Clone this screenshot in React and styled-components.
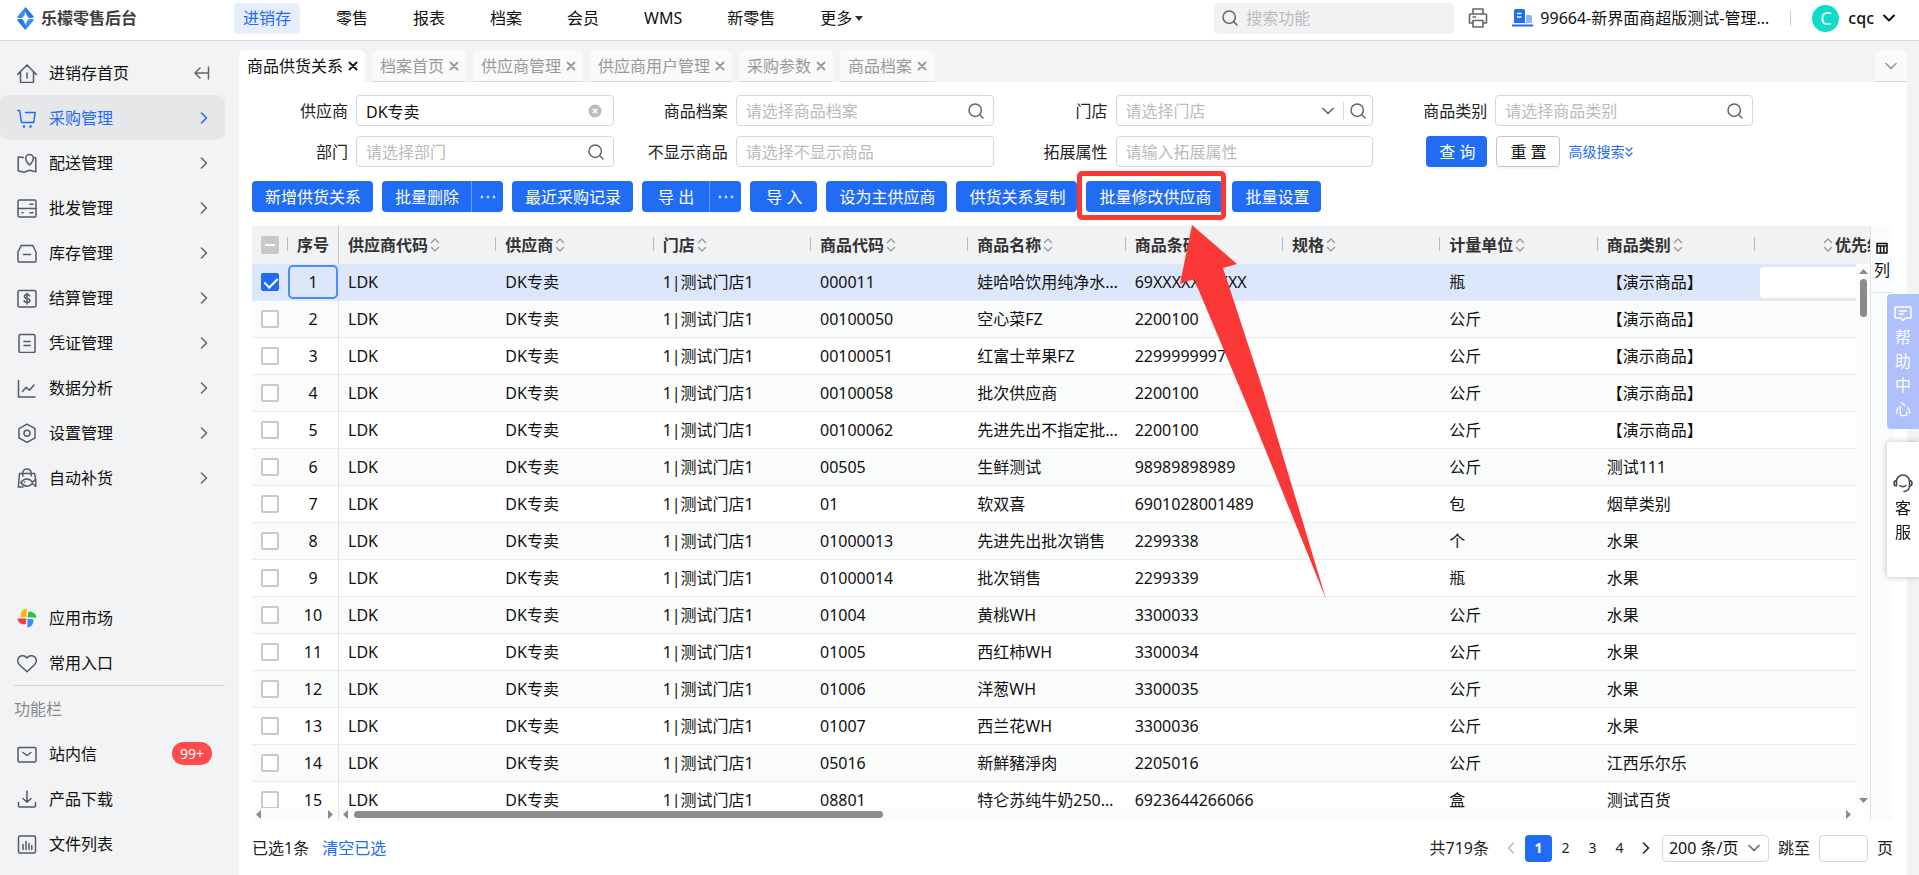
import React from 'react'
import styled, { createGlobalStyle, css } from 'styled-components'

const blue = '#216cf5'
const font = '"Noto Sans", "Noto Sans CJK SC", sans-serif'

const GlobalStyle = createGlobalStyle`
  * {
    box-sizing: border-box;
  }
  body {
    margin: 0;
    color: #111;
    font: 16px/24px ${font};
  }
  button, input, select {
    margin: 0;
    color: inherit;
    font: inherit;
  }
  button {
    padding: 0;
    border: 0;
    background: none;
    white-space: nowrap;
    cursor: pointer;
  }
  a {
    color: inherit;
    text-decoration: none;
  }
  svg {
    display: block;
    flex: none;
  }
`

const Page = styled.div`
  display: flex;
  flex-direction: column;
  height: 100vh;
  background: #f1f3f5;
`

/* ---------- icons ---------- */

const Svg = ({ size = 20, width, height, box, stroke = 1.5, children, ...rest }) => (
  <svg
    width={width || size}
    height={height || size}
    viewBox={box || `0 0 ${width || size} ${height || size}`}
    fill="none"
    stroke="currentColor"
    strokeWidth={stroke}
    strokeLinecap="round"
    strokeLinejoin="round"
    aria-hidden="true"
    {...rest}
  >
    {children}
  </svg>
)

const SearchIcon = () => (
  <Svg size={16}>
    <circle cx="7.2" cy="7.2" r="6.2" />
    <path d="M11.8 11.8L15 15" />
  </Svg>
)

const Chevron = ({ dir = 'right', size = 12, stroke = 1.6 }) => {
  const paths = {
    right: 'M3.5 1l5 5-5 5',
    left: 'M8.5 1l-5 5 5 5',
    down: 'M1 3.5l5 5 5-5',
  }
  return (
    <Svg size={size} box="0 0 12 12" stroke={stroke}>
      <path d={paths[dir]} />
    </Svg>
  )
}

const CloseIcon = () => (
  <Svg size={10} stroke={1.8}>
    <path d="M1.5 1.5l7 7M8.5 1.5l-7 7" />
  </Svg>
)

const Dots = () => (
  <svg width="16" height="4" viewBox="0 0 16 4" fill="#c8dafd" aria-hidden="true">
    <circle cx="2" cy="2" r="1.4" />
    <circle cx="8" cy="2" r="1.4" />
    <circle cx="14" cy="2" r="1.4" />
  </svg>
)

const SortIcon = () => (
  <Svg width={10} height={16} stroke={1.4}>
    <path d="M1.5 5.5L5 2l3.5 3.5M1.5 10.5L5 14l3.5-3.5" />
  </Svg>
)

const Triangle = ({ dir }) => {
  const points = {
    left: '6,0 6,9 1,4.5',
    right: '2,0 2,9 7,4.5',
    up: '0,7 9,7 4.5,2',
    down: '0,2 9,2 4.5,7',
  }
  return (
    <svg width="9" height="9" viewBox="0 0 9 9" aria-hidden="true">
      <polygon points={points[dir]} fill="#8b8b8b" />
    </svg>
  )
}

const menuIcons = {
  home: (
    <path d="M.5 11.500L10 2l9.500 9.500M3.500 9v9.500a1 1 0 0 0 1 1h11a1 1 0 0 0 1-1V9M10 10v5" />
  ),
  cart: (
    <>
      <path d="M.8 2.500h1.900l1.800 12h12.200l1.500-10H8.500" />
      <circle cx="7" cy="18.500" r=".6" />
      <circle cx="13.500" cy="18.500" r=".6" />
    </>
  ),
  map: (
    <>
      <path d="M6.500 4.500L1.200 4v13.800l5.600 1.500 6-2 6 1.500V5l-2-.5" />
      <path d="M12.500 12C9.800 9.500 8.700 7.500 8.700 5.300a3.800 3.800 0 0 1 7.600 0c0 2.200-1.100 4.200-3.800 6.700z" />
    </>
  ),
  server: (
    <>
      <rect x="1" y="2" width="18" height="17" rx="1.500" />
      <path d="M1 10.500h18M13 6.300h3M13 14.800h3M5 14.800h1" />
    </>
  ),
  box: (
    <>
      <path d="M4.200 2.500h11.600L19 9v9a1 1 0 0 1-1 1H2a1 1 0 0 1-1-1V9z" />
      <path d="M6.500 11.500h7" />
    </>
  ),
  money: (
    <>
      <rect x="1" y="2.500" width="18" height="16.500" rx="1.500" />
      <path d="M12.800 8c-.3-1-1.300-1.500-2.700-1.500-1.600 0-2.700.7-2.700 1.900 0 2.900 5.500 1.200 5.500 4.200 0 1.300-1.200 2-2.800 2-1.700 0-2.700-.6-3-1.800M10 5.200V16" />
    </>
  ),
  doc: (
    <>
      <rect x="2" y="1.500" width="16" height="18" rx="1.500" />
      <path d="M7 8.500h6M7 12.500h6" />
    </>
  ),
  chart: <path d="M1.500 2.500V19H18M5.500 13.500l3.700-4.200 3.300 3L17 7" />,
  setting: (
    <>
      <path d="M10 1.200l8 4.500v9.200l-8 4.500-8-4.500V5.700z" />
      <circle cx="10" cy="10.300" r="3" />
    </>
  ),
  bag: (
    <>
      <path d="M5.800 8V5.100a4.200 4.200 0 0 1 8.400 0V8M6 19H1.300L2.500 5.500h15l1 5" />
      <path d="M3.800 14.500c3.500-4.600 8.500-4.600 11.500-.4l3.500-2.800v7l-3.500-2.800c-3 3.800-8 3.800-11.500-1z" />
      <path d="M7.500 14h.1" />
    </>
  ),
  heart: (
    <path d="M10 18.800L2.300 11.500C0 9.100.3 5.500 2.600 3.700 4.900 1.900 8.100 2.500 10 5c1.900-2.500 5.100-3.100 7.400-1.300 2.300 1.800 2.600 5.400.3 7.800z" />
  ),
  mail: (
    <>
      <rect x="1" y="3.500" width="18" height="14.500" rx="1.200" />
      <path d="M6 8.500l4 3 4-3" />
    </>
  ),
  download: (
    <path d="M10 2v11M6 9.500l4 3.800 4-3.800M1.500 13.500V17a1 1 0 0 0 1 1h15a1 1 0 0 0 1-1v-3.500" />
  ),
  file: (
    <>
      <rect x="1.500" y="2" width="17" height="17" rx="1.500" />
      <path d="M6 10.500v5M9 7.500v8M12 9.500v6M14.800 11.500v4" />
    </>
  ),
}

const MarketIcon = () => (
  <svg width="20" height="20" viewBox="0 0 20 20" aria-hidden="true">
    <path d="M9.600 9.300V.5C5.500 1 3.200 4 3.800 8.700z" fill="#ffb400" />
    <path d="M10.700 9.600H19.500C19 5.500 16 3.200 11.300 3.800z" fill="#2fc53a" />
    <path d="M10.400 10.700v8.800c4.100-.5 6.400-3.500 5.800-8.200z" fill="#2f8ffb" />
    <path d="M9.300 10.400H.5c.5 4.100 3.500 6.400 8.200 5.800z" fill="#fb3a3d" />
  </svg>
)

/* ---------- header ---------- */

const Header = styled.header`
  display: flex;
  flex: none;
  align-items: center;
  height: 41px;
  padding: 0 24px 4px 17px;
  border-bottom: 1px solid #d7d8da;
  background: #fff;
`

const Logo = styled.a`
  display: flex;
  align-items: center;
  gap: 7px;
  width: 217px;
  color: #3b3d42;
  font-weight: 700;
`

const Nav = styled.nav`
  display: flex;
  gap: 27px;
`

const NavLink = styled.a`
  display: flex;
  align-items: center;
  gap: 3px;
  height: 31px;
  padding: 0 9px;
  border-radius: 4px;
  white-space: nowrap;
  ${(p) =>
    p.$active &&
    css`
      background: #e6edfc;
      color: ${blue};
    `}
`

const Caret = styled.span`
  border: 4px solid transparent;
  border-top: 5px solid #333;
  border-bottom: 0;
`

const GlobalSearch = styled.label`
  display: flex;
  align-items: center;
  gap: 8px;
  width: 240px;
  height: 31px;
  margin-left: auto;
  padding: 0 8px;
  border-radius: 4px;
  background: #f1f2f4;
  color: #666;

  input {
    flex: 1;
    min-width: 0;
    padding: 0;
    border: 0;
    outline: 0;
    background: none;
  }
  input::placeholder {
    color: #bbb;
  }
`

const PrintButton = styled.button`
  margin-left: 14px;
  color: #666;
`

const Company = styled.a`
  display: flex;
  align-items: center;
  gap: 7px;
  width: 257px;
  margin-left: 24px;

  span {
    overflow: hidden;
    text-overflow: ellipsis;
    white-space: nowrap;
  }
`

const Divider = styled.i`
  width: 1px;
  height: 16px;
  margin: 0 21px;
  background: #ccc;
`

const User = styled.button`
  display: flex;
  align-items: center;
  gap: 9px;
  font-weight: 500;
`

const Avatar = styled.span`
  width: 27px;
  height: 27px;
  border-radius: 50%;
  background: #10dbc9;
  color: #fff;
  font-size: 18px;
  font-weight: 400;
  line-height: 27px;
  text-align: center;
`

/* ---------- sidebar ---------- */

const Body = styled.div`
  display: flex;
  flex: 1;
  min-height: 0;
`

const Sidebar = styled.aside`
  display: flex;
  flex: none;
  flex-direction: column;
  width: 239px;
  padding: 9px 14px 9px 0;
`

const MenuItem = styled.a`
  display: flex;
  align-items: center;
  gap: 12px;
  height: 45px;
  padding: 0 15px 0 17px;
  border-radius: 8px;
  ${(p) => p.$active && `background: #e5e7e9; color: ${blue};`}

  > svg {
    color: ${(p) => (p.$active ? blue : '#565a68')};
  }
  > span:last-child {
    margin-left: auto;
    color: ${(p) => (p.$active ? blue : '#666')};
  }
`

const SideGap = styled.div`
  flex: 1;
`

const SectionTitle = styled.div`
  height: 46px;
  margin-left: 14px;
  border-top: 1px solid #d3d5d8;
  color: #888;
  line-height: 46px;
`

const Badge = styled.b`
  height: 23px;
  margin-right: -2px;
  margin-left: auto;
  padding: 0 8px;
  border-radius: 12px;
  background: #ff4b4e;
  color: #fff;
  font-size: 14px;
  font-weight: 400;
  line-height: 23px;
`

/* ---------- content ---------- */

const Main = styled.main`
  display: flex;
  flex: 1;
  flex-direction: column;
  min-width: 0;
  margin-right: 12px;
  padding-top: 9px;
`

const Tabs = styled.div`
  display: flex;
  flex: none;
  gap: 7px;
  height: 32px;
`

const Tab = styled.button`
  display: flex;
  align-items: center;
  gap: 5px;
  height: 32px;
  padding: 0 7px 0 8px;
  border-bottom: 1px solid ${(p) => (p.$active ? '#fff' : '#d9dadb')};
  border-radius: 5px 5px 0 0;
  background: ${(p) => (p.$active ? '#fff' : '#fafafa')};
  color: ${(p) => (p.$active ? '#111' : '#999')};
`

const TabsMore = styled(Tab)`
  justify-content: center;
  width: 32px;
  margin-left: auto;
  padding: 0;
`

const Card = styled.section`
  display: flex;
  flex: 1;
  flex-direction: column;
  min-height: 0;
  padding: 13px 14px 0 13px;
  background: #fff;
`

const Filters = styled.form`
  display: grid;
  grid-template-columns: repeat(4, minmax(0, 1fr));
  gap: 10px 18px;
  padding-right: 140px;
`

const Field = styled.div`
  display: flex;
  align-items: center;
  gap: 8px;
  height: 31px;

  > label {
    width: 96px;
    color: #222;
    text-align: right;
    white-space: nowrap;
  }
`

const Control = styled.div`
  display: flex;
  flex: 1;
  align-items: center;
  min-width: 0;
  height: 31px;
  padding: 0 9px;
  border: 1px solid #d6d7d9;
  border-radius: 4px;
  color: #666;

  input, select {
    flex: 1;
    min-width: 0;
    height: 28px;
    padding: 0;
    border: 0;
    outline: 0;
    appearance: none;
    background: none;
    color: #111;
  }
  select {
    color: #bbb;
  }
  input::placeholder {
    color: #bbb;
  }
`

const StoreControl = styled(Control)`
  padding-right: 6px;
`

const Bar = styled.i`
  width: 1px;
  height: 18px;
  margin: 0 6px 0 9px;
  background: #d6d7d9;
`

const FilterActions = styled.div`
  display: flex;
  align-items: center;
  gap: 9px;
  padding-left: 35px;
`

const Button = styled.button`
  height: 31px;
  padding: 0 12px 0 13px;
  border: ${(p) => (p.$plain ? '1px solid #c4c6c9' : '0')};
  border-radius: 4px;
  background: ${(p) => (p.$plain ? '#fff' : blue)};
  box-shadow: 0 2px 0 rgba(0, 0, 0, 0.03);
  color: ${(p) => (p.$plain ? '#111' : '#fff')};
`

const MoreLink = styled.a`
  display: flex;
  align-items: center;
  color: ${blue};
  font-size: 14px;
  white-space: nowrap;
`

const Toolbar = styled.div`
  display: flex;
  gap: 9px;
  margin: 14px 0;
`

const ToolButton = styled(Button)`
  ${(p) => p.$short && 'padding: 0 15px 0 16px;'}
`

const Split = styled.div`
  display: flex;

  > button:first-child {
    border-radius: 4px 0 0 4px;
  }
`

const SplitMore = styled(Button)`
  display: flex;
  align-items: center;
  justify-content: center;
  width: 32px;
  padding: 0;
  border-left: 1px solid #6c9df9;
  border-radius: 0 4px 4px 0;
`

const Marked = styled.div`
  position: relative;
  z-index: 2;

  &::after {
    content: '';
    position: absolute;
    inset: -10px -3px -8px -9px;
    border: 5px solid #fb3838;
    border-radius: 5px;
    pointer-events: none;
  }
  > svg {
    position: absolute;
    top: 44px;
    left: 94px;
    pointer-events: none;
  }
`

/* ---------- table ---------- */

const Grid = styled.div`
  display: flex;
  flex: 1;
  min-height: 0;
`

const TableArea = styled.div`
  display: flex;
  flex: 1;
  flex-direction: column;
  min-width: 0;
`

const Viewport = styled.div`
  position: relative;
  flex: 1;
  min-height: 0;
  overflow: hidden;
`

const Table = styled.table`
  width: 100%;
  border-spacing: 0;
  table-layout: fixed;
`

const Th = styled.th`
  position: relative;
  height: 38px;
  padding: 0 0 0 ${(p) => (p.$last ? 68 : 9)}px;
  overflow: hidden;
  background: #f1f2f4;
  color: #333;
  font-weight: 700;
  text-align: left;
  white-space: nowrap;
  ${(p) => p.$pinned && 'border-right: 1px solid #c3c6cd;'}

  &::after {
    content: '';
    position: absolute;
    top: 11px;
    right: 0;
    width: ${(p) => (p.$pinned || p.$last ? 0 : 1)}px;
    height: 14px;
    background: #b3b7c0;
  }
  > span {
    display: flex;
    align-items: center;
    gap: 2px;
  }
  svg {
    color: #999;
  }
`

const Row = styled.tr`
  background: ${(p) => (p.$selected ? '#dde7fb' : p.$even ? '#fafcfb' : '#fff')};
`

const Td = styled.td`
  height: 37px;
  padding: 0 5px 0 9px;
  border-bottom: 1px solid #e9eaea;
  overflow: hidden;
  text-overflow: ellipsis;
  white-space: nowrap;
`

const IndexCell = styled(Td)`
  padding: 1px 0;
  border-right: 1px solid #e1e2e4;
  text-align: center;

  > span {
    display: block;
    height: 34px;
    border: 2px solid ${(p) => (p.$selected ? '#4d8cf9' : 'transparent')};
    border-radius: 5px;
    line-height: 30px;
  }
`

const EditCell = styled(Td)`
  padding: 1px 0 1px 4px;

  input {
    display: block;
    width: 100%;
    height: 33px;
    border: 1px solid #e3e5e8;
    border-radius: 4px;
    background: #fff;
  }
`

const Checkbox = styled.input.attrs({ type: 'checkbox' })`
  display: block;
  position: relative;
  width: 18px;
  height: 18px;
  border: 2px solid #c9c9c9;
  border-radius: 2px;
  appearance: none;
  background: #fff;

  &:checked {
    border-color: ${blue};
    background: ${blue};
  }
  &:checked::after {
    content: '';
    position: absolute;
    top: 0;
    left: 4px;
    width: 6px;
    height: 11px;
    border: solid #fff;
    border-width: 0 2px 2px 0;
    transform: rotate(45deg);
  }
  ${(p) =>
    p.$partial &&
    css`
      background: #c9c9c9;
      &::after {
        content: '';
        position: absolute;
        top: 6px;
        left: 2px;
        width: 10px;
        height: 2px;
        background: #fff;
      }
    `}
`

const ScrollY = styled.div`
  display: flex;
  position: absolute;
  top: 38px;
  right: 0;
  bottom: 0;
  flex-direction: column;
  align-items: center;
  width: 14px;
  padding: 3px 0;
  background: #fcfcfc;
`

const ScrollX = styled.div`
  display: flex;
  flex: none;
  height: 13px;
  margin-right: 14px;
  background: #fcfcfc;
`

const ScrollPart = styled.div`
  display: flex;
  align-items: center;
  justify-content: space-between;
  padding: 0 3px;
  ${(p) => (p.$pinned ? 'width: 87px; border-right: 1px solid #e1e2e4;' : 'flex: 1;')}
`

const ThumbY = styled.span`
  width: 7px;
  height: 38px;
  margin: 3px 0 auto;
  border-radius: 4px;
  background: #8b8b8b;
`

const ThumbX = styled.span`
  width: 35%;
  height: 7px;
  margin: 0 auto 0 3px;
  border-radius: 4px;
  background: #8b8b8b;
`

const ColumnPanel = styled.div`
  flex: none;
  width: 23px;
  border-left: 1px solid #e1e3e6;
  background: #fafbfc;

  button {
    display: flex;
    flex-direction: column;
    align-items: center;
    gap: 4px;
    width: 22px;
    height: 67px;
    padding-top: 16px;
    border-bottom: 1px solid #e1e3e6;
  }
`

const Footer = styled.footer`
  display: flex;
  flex: none;
  align-items: center;
  gap: 9px;
  height: 54px;
  color: #222;
  white-space: nowrap;

  > a {
    margin: 0 auto 0 4px;
    color: ${blue};
  }
`

const Pages = styled.nav`
  display: flex;
`

const PageButton = styled.button`
  display: flex;
  align-items: center;
  justify-content: center;
  width: 27px;
  height: 27px;
  border-radius: 4px;
  font-size: 14px;
  ${(p) => p.$active && `background: ${blue}; color: #fff; font-weight: 700;`}
  &:disabled {
    color: #bbb;
  }
`

const PageSize = styled.div`
  display: flex;
  align-items: center;
  width: 107px;
  height: 27px;
  margin-left: -7px;
  padding: 0 8px 0 6px;
  border: 1px solid #d6d7d9;
  border-radius: 4px;
  color: #666;

  select {
    flex: 1;
    min-width: 0;
    padding: 0;
    border: 0;
    appearance: none;
    background: none;
    color: #111;
  }
`

const JumpInput = styled.input`
  width: 49px;
  height: 27px;
  border: 1px solid #d6d7d9;
  border-radius: 4px;
`

/* ---------- floating buttons ---------- */

const Floating = styled.div`
  display: flex;
  position: fixed;
  top: 294px;
  right: 0;
  z-index: 3;
  flex-direction: column;
  gap: 13px;
`

const FloatButton = styled.button`
  display: flex;
  flex-direction: column;
  align-items: center;
  justify-content: center;
  width: 32px;
  height: 135px;
  padding-bottom: ${(p) => (p.$help ? 0 : 6)}px;
  border-radius: 4px 0 0 4px;
  background: ${(p) => (p.$help ? '#aec1fc' : '#fff')};
  box-shadow: ${(p) => (p.$help ? 'none' : '0 0 6px rgba(0, 0, 0, 0.25)')};
  color: ${(p) => (p.$help ? '#fff' : '#111')};
  line-height: 24px;

  svg {
    margin: 3px 0;
    color: ${(p) => (p.$help ? '#fff' : '#444a5a')};
  }
`

/* ---------- data ---------- */

const navItems = ['进销存', '零售', '报表', '档案', '会员', 'WMS', '新零售']

const menu = [
  ['cart', '采购管理'],
  ['map', '配送管理'],
  ['server', '批发管理'],
  ['box', '库存管理'],
  ['money', '结算管理'],
  ['doc', '凭证管理'],
  ['chart', '数据分析'],
  ['setting', '设置管理'],
  ['bag', '自动补货'],
]

const tabs = ['商品供货关系', '档案首页', '供应商管理', '供应商用户管理', '采购参数', '商品档案']

const columns = ['供应商代码', '供应商', '门店', '商品代码', '商品名称', '商品条码', '规格', '计量单位', '商品类别']

const goods = [
  ['000011', '娃哈哈饮用纯净水596ml', '69XXXXXXXXXX', '瓶', '【演示商品】'],
  ['00100050', '空心菜FZ', '2200100', '公斤', '【演示商品】'],
  ['00100051', '红富士苹果FZ', '2299999997', '公斤', '【演示商品】'],
  ['00100058', '批次供应商', '2200100', '公斤', '【演示商品】'],
  ['00100062', '先进先出不指定批次销售', '2200100', '公斤', '【演示商品】'],
  ['00505', '生鲜测试', '98989898989', '公斤', '测试111'],
  ['01', '软双喜', '6901028001489', '包', '烟草类别'],
  ['01000013', '先进先出批次销售', '2299338', '个', '水果'],
  ['01000014', '批次销售', '2299339', '瓶', '水果'],
  ['01004', '黄桃WH', '3300033', '公斤', '水果'],
  ['01005', '西红柿WH', '3300034', '公斤', '水果'],
  ['01006', '洋葱WH', '3300035', '公斤', '水果'],
  ['01007', '西兰花WH', '3300036', '公斤', '水果'],
  ['05016', '新鮮豬淨肉', '2205016', '公斤', '江西乐尔乐'],
  ['08801', '特仑苏纯牛奶250ml*12', '6923644266066', '盒', '测试百货'],
]

const Item = ({ icon, label, arrow, active, children }) => (
  <MenuItem href="#" $active={active}>
    {icon === 'market' ? <MarketIcon /> : <Svg>{menuIcons[icon]}</Svg>}
    {label}
    {arrow && (
      <span>
        <Chevron />
      </span>
    )}
    {children}
  </MenuItem>
)

const TextField = ({ id, label, placeholder, value, icon }) => (
  <Field>
    <label htmlFor={id}>{label}</label>
    <Control>
      <input id={id} placeholder={placeholder} defaultValue={value} />
      {icon}
    </Control>
  </Field>
)

const ClearButton = styled.button`
  margin-right: 2px;
`

const ClearIcon = () => (
  <ClearButton type="button" aria-label="清除">
    <svg width="14" height="14" viewBox="0 0 14 14" aria-hidden="true">
      <circle cx="7" cy="7" r="6.5" fill="#bcbcbc" />
      <path d="M4.7 4.7l4.6 4.6M9.3 4.7L4.7 9.3" stroke="#fff" strokeWidth="1.5" />
    </svg>
  </ClearButton>
)

const TopBar = () => (
  <Header>
    <Logo href="#">
      <svg width="17" height="23" viewBox="0 0 17 23" aria-hidden="true">
        <path d="M8.5 0l8 9.500v4l-8 9.500-8-9.500v-4z" fill="#3d8bfa" />
        <path d="M.5 13.500L8.500 23v-5L4 12z" fill="#2674f2" />
        <path d="M16.500 9.500L8.500 0v5l4.500 6z" fill="#2674f2" />
        <path d="M8.500 4.500c.8 4 1.800 5.800 4.500 7-2.700 1.200-3.700 3-4.500 7-.8-4-1.800-5.800-4.500-7 2.700-1.200 3.700-3 4.500-7z" fill="#fff" />
        <path d="M0 11.500h4.500M12.500 11.500H17" stroke="#fff" strokeWidth="1" />
      </svg>
      乐檬零售后台
    </Logo>
    <Nav>
      {navItems.map((name, i) => (
        <NavLink href="#" key={name} $active={i === 0}>
          {name}
        </NavLink>
      ))}
      <NavLink href="#">
        更多
        <Caret />
      </NavLink>
    </Nav>
    <GlobalSearch>
      <SearchIcon />
      <input placeholder="搜索功能" aria-label="搜索功能" />
    </GlobalSearch>
    <PrintButton aria-label="打印">
      <Svg stroke={1.6}>
        <path d="M5 5.500V1h10v4.500M4.500 15h-3V7a1 1 0 0 1 1-1h15a1 1 0 0 1 1 1v8h-3M5 12.500h10V19H5zM5 9h2.500" />
      </Svg>
    </PrintButton>
    <Company href="#">
      <svg width="21" height="18" viewBox="0 0 21 18" aria-hidden="true">
        <path d="M2 1.500A1.500 1.500 0 0 1 3.500 0h8A1.500 1.500 0 0 1 13 1.500V14H2z" fill={blue} />
        <path d="M14 6h4.500A1.500 1.500 0 0 1 20 7.500V14h-6z" fill="#8db4fb" />
        <path d="M5 4.500h4.500M5 8h4.500" stroke="#fff" strokeWidth="1.5" />
        <path d="M0 16.500h21" stroke={blue} strokeWidth="2" />
      </svg>
      <span>99664-新界面商超版测试-管理中心</span>
    </Company>
    <Divider />
    <User>
      <Avatar>C</Avatar>
      cqc
      <Chevron dir="down" stroke={2} />
    </User>
  </Header>
)

const SideMenu = () => (
  <Sidebar>
    <Item icon="home" label="进销存首页">
      <span>
        <Svg width={16} height={14}>
          <path d="M6 2L1 7l5 5M1 7h13M14.500 1v12" />
        </Svg>
      </span>
    </Item>
    {menu.map(([icon, label], i) => (
      <Item key={label} icon={icon} label={label} arrow active={i === 0} />
    ))}
    <SideGap />
    <Item icon="market" label="应用市场" />
    <Item icon="heart" label="常用入口" />
    <SectionTitle>功能栏</SectionTitle>
    <Item icon="mail" label="站内信">
      <Badge>99+</Badge>
    </Item>
    <Item icon="download" label="产品下载" />
    <Item icon="file" label="文件列表" />
  </Sidebar>
)

const FilterForm = () => (
  <Filters onSubmit={(e) => e.preventDefault()}>
    <TextField id="supplier" label="供应商" value="DK专卖" icon={<ClearIcon />} />
    <TextField id="goods" label="商品档案" placeholder="请选择商品档案" icon={<SearchIcon />} />
    <Field>
      <label htmlFor="store">门店</label>
      <StoreControl>
        <select id="store">
          <option>请选择门店</option>
        </select>
        <Chevron dir="down" />
        <Bar />
        <SearchIcon />
      </StoreControl>
    </Field>
    <TextField id="category" label="商品类别" placeholder="请选择商品类别" icon={<SearchIcon />} />
    <TextField id="dept" label="部门" placeholder="请选择部门" icon={<SearchIcon />} />
    <TextField id="hidden-goods" label="不显示商品" placeholder="请选择不显示商品" />
    <TextField id="extra" label="拓展属性" placeholder="请输入拓展属性" />
    <FilterActions>
      <Button type="submit">查 询</Button>
      <Button type="reset" $plain>
        重 置
      </Button>
      <MoreLink href="#">
        高级搜索
        <Svg width={8} height={12} stroke={1.2}>
          <path d="M1 2l3 3 3-3M1 7l3 3 3-3" />
        </Svg>
      </MoreLink>
    </FilterActions>
  </Filters>
)

const Actions = () => (
  <Toolbar>
    <ToolButton>新增供货关系</ToolButton>
    <Split>
      <ToolButton>批量删除</ToolButton>
      <SplitMore aria-label="更多删除">
        <Dots />
      </SplitMore>
    </Split>
    <ToolButton>最近采购记录</ToolButton>
    <Split>
      <ToolButton $short>导 出</ToolButton>
      <SplitMore aria-label="更多导出">
        <Dots />
      </SplitMore>
    </Split>
    <ToolButton $short>导 入</ToolButton>
    <ToolButton>设为主供应商</ToolButton>
    <ToolButton>供货关系复制</ToolButton>
    <Marked>
      <ToolButton>批量修改供应商</ToolButton>
      <svg width="146" height="374" viewBox="0 0 146 374" aria-hidden="true">
        <polygon points="12,0 57,39 43,43 84,168 146,374 72,192 14,54 0,59" fill="#fb3838" />
      </svg>
    </Marked>
    <ToolButton>批量设置</ToolButton>
  </Toolbar>
)

const GoodsTable = () => (
  <Table>
    <colgroup>
      <col style={{ width: 36 }} />
      <col style={{ width: 51 }} />
      {columns.map((name) => (
        <col key={name} />
      ))}
      <col style={{ width: 115 }} />
    </colgroup>
    <thead>
      <tr>
        <Th>
          <Checkbox $partial aria-label="全选" />
        </Th>
        <Th $pinned>序号</Th>
        {columns.map((name) => (
          <Th key={name}>
            <span>
              {name}
              <SortIcon />
            </span>
          </Th>
        ))}
        <Th $last>
          <span>
            <SortIcon />
            优先级
          </span>
        </Th>
      </tr>
    </thead>
    <tbody>
      {goods.map(([code, name, barcode, unit, category], i) => (
        <Row key={code} $selected={i === 0} $even={i % 2 === 1}>
          <Td>
            <Checkbox defaultChecked={i === 0} aria-label={`选择第${i + 1}行`} />
          </Td>
          <IndexCell $selected={i === 0}>
            <span>{i + 1}</span>
          </IndexCell>
          <Td>LDK</Td>
          <Td>DK专卖</Td>
          <Td>1|测试门店1</Td>
          <Td>{code}</Td>
          <Td>{name}</Td>
          <Td>{barcode}</Td>
          <Td />
          <Td>{unit}</Td>
          <Td>{category}</Td>
          {i === 0 ? (
            <EditCell>
              <input aria-label="优先级" />
            </EditCell>
          ) : (
            <Td />
          )}
        </Row>
      ))}
    </tbody>
  </Table>
)

const Pagination = () => (
  <Footer>
    <span>已选1条</span>
    <a href="#">清空已选</a>
    <span>共719条</span>
    <Pages>
      <PageButton disabled aria-label="上一页">
        <Chevron dir="left" />
      </PageButton>
      {[1, 2, 3, 4].map((n) => (
        <PageButton key={n} $active={n === 1}>
          {n}
        </PageButton>
      ))}
      <PageButton aria-label="下一页">
        <Chevron />
      </PageButton>
    </Pages>
    <PageSize>
      <select aria-label="每页条数">
        <option>200 条/页</option>
      </select>
      <Chevron dir="down" />
    </PageSize>
    <label htmlFor="jump">跳至</label>
    <JumpInput id="jump" />
    <span>页</span>
  </Footer>
)

const App = () => (
  <Page>
    <GlobalStyle />
    <TopBar />
    <Body>
      <SideMenu />
      <Main>
        <Tabs>
          {tabs.map((name, i) => (
            <Tab key={name} $active={i === 0}>
              {name}
              <CloseIcon />
            </Tab>
          ))}
          <TabsMore aria-label="全部标签">
            <Chevron dir="down" />
          </TabsMore>
        </Tabs>
        <Card>
          <FilterForm />
          <Actions />
          <Grid>
            <TableArea>
              <Viewport>
                <GoodsTable />
                <ScrollY>
                  <Triangle dir="up" />
                  <ThumbY />
                  <Triangle dir="down" />
                </ScrollY>
              </Viewport>
              <ScrollX>
                <ScrollPart $pinned>
                  <Triangle dir="left" />
                  <Triangle dir="right" />
                </ScrollPart>
                <ScrollPart>
                  <Triangle dir="left" />
                  <ThumbX />
                  <Triangle dir="right" />
                </ScrollPart>
              </ScrollX>
            </TableArea>
            <ColumnPanel>
              <button>
                <Svg size={12}>
                  <path d="M1 1.500h10M1 4h10M1 1.500v9.500h10V1.500M4.500 4v7M7.800 4v7" />
                </Svg>
                列
              </button>
            </ColumnPanel>
          </Grid>
          <Pagination />
        </Card>
      </Main>
    </Body>
    <Floating>
      <FloatButton $help>
        <Svg width={18} height={16} stroke={1.6}>
          <path d="M2 1h14a1 1 0 0 1 1 1v9a1 1 0 0 1-1 1h-4.500L9 14.500 6.500 12H2a1 1 0 0 1-1-1V2a1 1 0 0 1 1-1zM5.500 5h7M5.500 8h4" />
        </Svg>
        <span>帮</span>
        <span>助</span>
        <span>中</span>
        <span>心</span>
      </FloatButton>
      <FloatButton>
        <Svg stroke={1.6}>
          <path d="M3.500 13V8.500a6.500 6.500 0 0 1 13 0V13c0 3-2 5-5.500 5.500M3.500 7.500C2 7.500 1 8.500 1 10.200S2 13 3.500 13M16.500 7.500c1.500 0 2.500 1 2.500 2.700S18 13 16.500 13M7 12.500c1.500 1.500 4.500 1.500 6 0" />
        </Svg>
        <span>客</span>
        <span>服</span>
      </FloatButton>
    </Floating>
  </Page>
)

export default App
